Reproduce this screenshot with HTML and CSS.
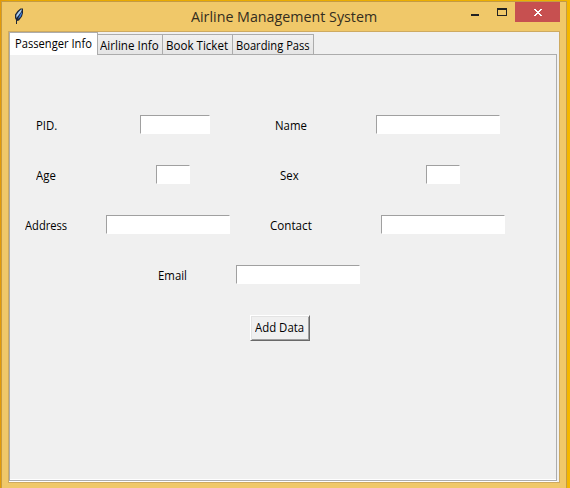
FILE: index.html
```
<!DOCTYPE html>
<html lang="en">
<head>
<meta charset="utf-8">
<title>Airline Management System</title>
<link rel="stylesheet" href="styles.css">
</head>
<body>
<div class="window">
  <header class="titlebar">
    <svg class="feather" width="12" height="18" viewBox="0 0 12 18">
      <path d="M2 16V12L1 10V6.5L3.5 3L6.5 .5H9V5L8 8.5L5 12.5L3 13V16Z" fill="#1d2636"/>
      <path d="M2.3 10V7L4.5 4L7 1.5H8L7 4L4 8Z" fill="#a9cdf0"/>
      <path d="M3.8 11L7.5 4L8 5.5L6.5 9Z" fill="#3b7de0"/>
    </svg>
    <h1 class="title"><span>Airline Management System</span></h1>
    <div class="controls">
      <svg width="45" height="20" viewBox="0 0 45 20" shape-rendering="crispEdges"><path d="M1 12h8v2H1z" fill="#222"/><path d="M27 6h10v8H27zM28 8v5h8V8z" fill="#222" fill-rule="evenodd"/></svg>
      <button class="close" aria-label="Close"><svg width="8" height="7" viewBox="0 0 8 7" shape-rendering="crispEdges"><path d="M0 0h2v1h1v1h2V1h1V0h2v1H7v1H6v1H5v1h1v1h1v1h1v1H6V6H5V5H3v1H2v1H0V6h1V5h1V4h1V3H2V2H1V1H0z" fill="#fff"/></svg></button>
    </div>
  </header>
  <main class="client">
    <nav class="tabs">
      <div class="tab active"><span>Passenger Info</span></div>
      <div class="tab airline"><span>Airline Info</span></div>
      <div class="tab ticket"><span>Book Ticket</span></div>
      <div class="tab boarding"><span>Boarding Pass</span></div>
    </nav>
    <form class="pane">
      <div class="row">
        <label class="left"><span>PID.</span></label><div class="field first"><input class="medium"></div>
        <label class="right"><span>Name</span></label><div class="field second"><input class="long"></div>
      </div>
      <div class="row">
        <label class="left"><span>Age</span></label><div class="field first age"><input class="short"></div>
        <label class="right sex"><span>Sex</span></label><div class="field second sexfield"><input class="short"></div>
      </div>
      <div class="row">
        <label class="left address"><span>Address</span></label><div class="field first addressfield"><input class="long"></div>
        <label class="right contact"><span>Contact</span></label><div class="field second contactfield"><input class="long"></div>
      </div>
      <div class="row email">
        <label><span>Email</span></label><input class="long">
      </div>
      <button type="button" class="add"><span>Add Data</span></button>
    </form>
  </main>
</div>
</body>
</html>
```
FILE: styles.css
```
* { box-sizing: border-box; }
html, body { height: 100%; overflow: hidden; }
body {
  margin: 0;
  padding: 1px 3px 0 1px;
  background: linear-gradient(90deg, #e39a08 0, #e8a800 10px, #eeb000 560px, #f5b800 100%);
  font: 12px/16px "Open Sans", sans-serif;
  color: #000;
}
.window {
  height: 500px;
  border: 1px solid #c49b45;
  background: #f0c869;
  padding: 0 6px;
}
.titlebar { display: flex; height: 29px; }
.feather { margin: 6px 0 0 6px; flex: none; }
.title {
  margin: 4px 0 0 165px;
  width: 187px;
  font-size: 15px;
  line-height: 20px;
  font-weight: 400;
  color: #342d20;
  white-space: nowrap;
}
.title span { display: inline-block; transform: scaleX(.951); transform-origin: 0 50%; }
.controls { display: flex; margin-left: 92px; }
.controls > svg { flex: none; }
.close {
  display: flex;
  width: 45px;
  height: 20px;
  padding: 7px 0 0 19px;
  border: 0;
  background: #c75050;
  flex: none;
}
.client {
  width: 552px;
  height: 452px;
  border: 1px solid #ceaa60;
  background: #f0f0f0;
}
.tabs { display: flex; align-items: flex-end; height: 23px; }
.tab {
  height: 21px;
  border: 1px solid #acacac;
  background: linear-gradient(#f0f0f0, #e5e5e5);
  padding: 3px 0 0 2px;
  white-space: nowrap;
}
.tab span, label span, .add span { display: inline-block; transform-origin: 0 50%; white-space: nowrap; }
.tab span { transform: scaleX(.93); }
.tab.active {
  width: 89px;
  height: 23px;
  padding: 3px 0 0 5px;
  background: #fff;
  border-bottom: 0;
}
.tab.airline { width: 65px; border-left: 0; }
.tab.ticket { width: 70px; padding-left: 3px; border-left: 0; }
.tab.boarding { width: 81px; padding-left: 3px; border-left: 0; }
.airline span { transform: scaleX(.965); }
.ticket span { transform: scaleX(.965); }
.tabs::after { content: ""; width: 243px; height: 1px; background: #acacac; }
.pane {
  width: 548px;
  height: 426px;
  margin: 0;
  padding-top: 60px;
  border: 1px solid #acacac;
  border-top: 0;
  box-shadow: inset 0 -1px #fff, 0 1px #fff;
}
.row { display: flex; height: 50px; }
label { padding-top: 3px; flex: none; }
label span { transform: scaleX(.95); }
.left { width: 86px; padding-left: 26px; }
.right { width: 91px; padding-left: 0; }
.field { flex: none; }
.first { width: 179px; padding-left: 44px; }
.second { padding-left: 10px; }
.age { padding-left: 60px; }
.sex { padding-left: 5px; }
.sexfield { padding-left: 60px; }
.address { padding-left: 15px; }
.address span { transform: scaleX(.93); }
.addressfield { width: 174px; padding-left: 10px; }
.contact { width: 96px; }
.contact span { transform: scaleX(.97); }
.contactfield { padding-left: 15px; }
.email { padding-left: 148px; }
.email label { width: 78px; }
input {
  display: block;
  height: 19px;
  border: 1px solid;
  border-color: #a0a0a0 #fff #fff #a0a0a0;
  padding: 0 2px;
  background: #fff;
  font: inherit;
}
.short { width: 34px; }
.medium { width: 70px; }
.long { width: 124px; }
.add {
  display: block;
  width: 60px;
  height: 26px;
  margin-left: 240px;
  padding: 0 0 0 4px;
  border: 1px solid;
  border-color: #fff #696969 #696969 #fff;
  box-shadow: inset 1px 1px #e3e3e3, inset -1px -1px #a0a0a0;
  background: #f0f0f0;
  font: inherit;
  text-align: left;
  color: #000;
}
.add span { transform: scaleX(.95); }
```
